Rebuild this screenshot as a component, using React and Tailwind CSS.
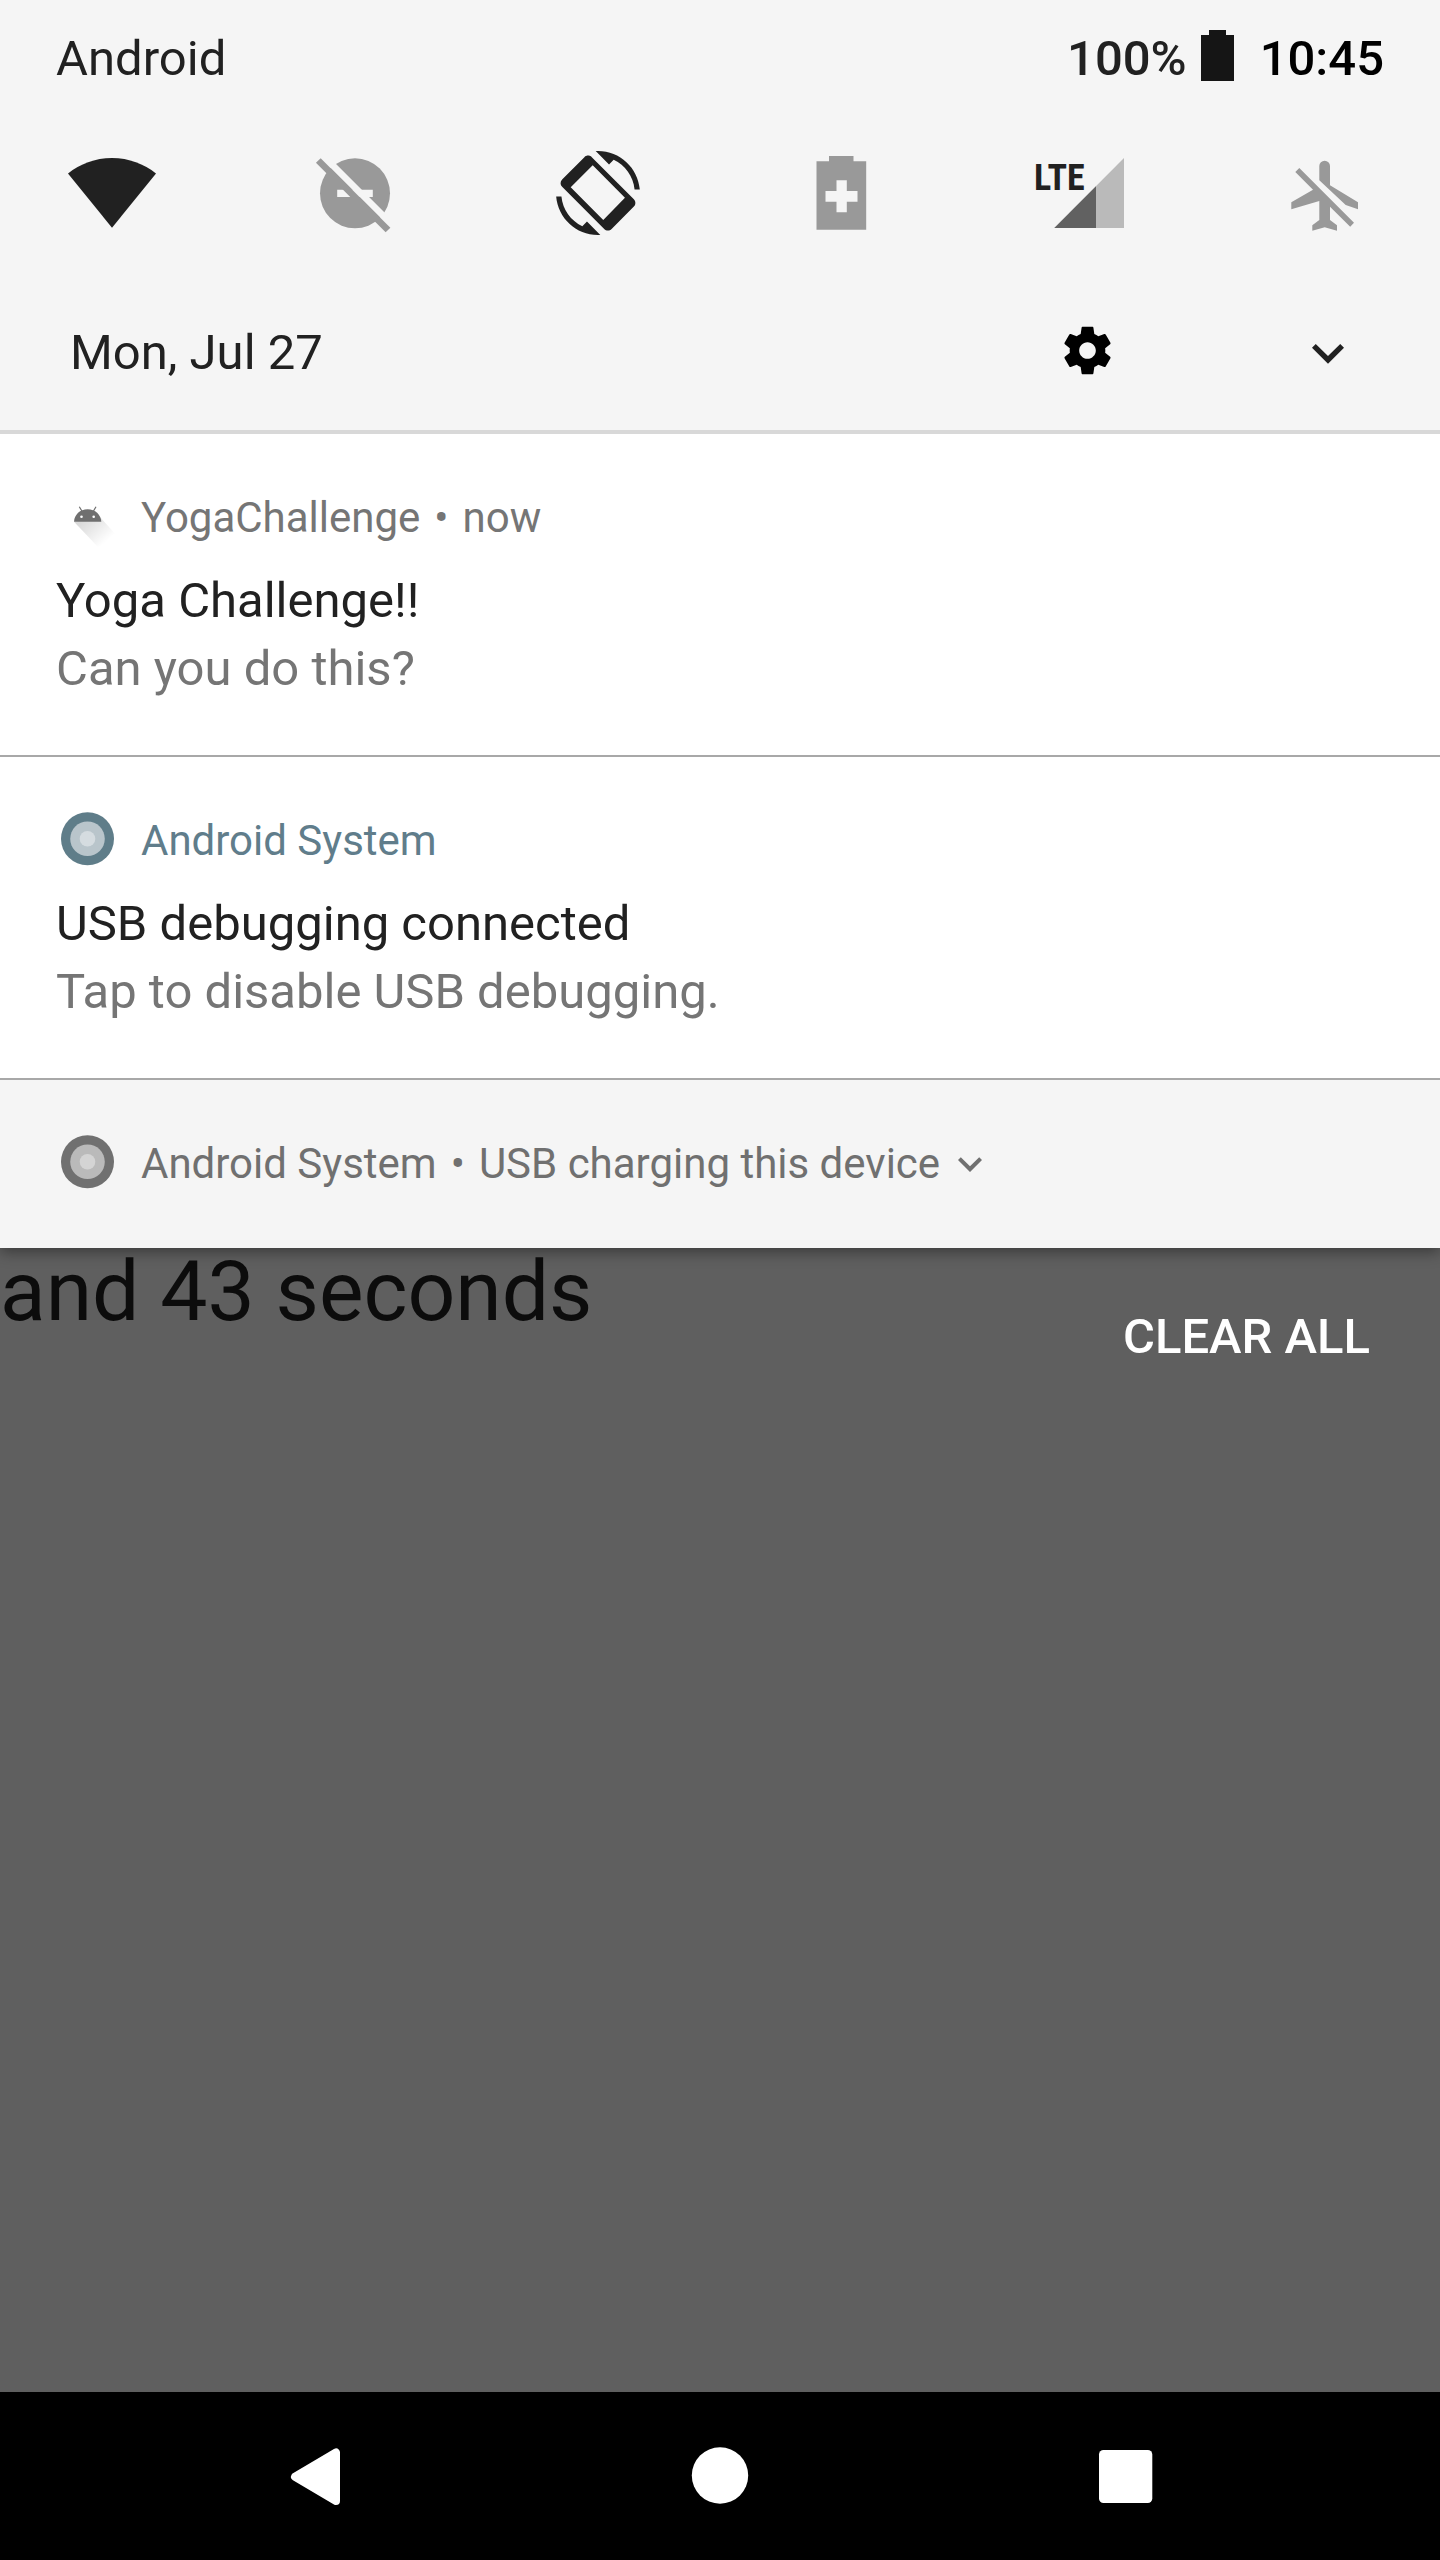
function Tile({ label, children }) {
  return (
    <button type="button" aria-label={label} className="h-28 w-28">
      <svg viewBox="0 0 112 112" className="h-28 w-28">
        {children}
      </svg>
    </button>
  );
}

function Chevron({ className }) {
  return (
    <svg viewBox="0 0 24 24" className={className} fill="currentColor" aria-hidden="true">
      <path d="M16.59 8.59 12 13.17 7.41 8.59 6 10l6 6 6-6z" />
    </svg>
  );
}

function SystemIcon({ outer, middle, inner }) {
  return (
    <svg viewBox="0 0 63 63" className="h-[63px] w-[63px] shrink-0" aria-hidden="true">
      <circle cx="31.5" cy="28.8" r="26.5" fill={outer} />
      <circle cx="31.5" cy="28.8" r="17.3" fill={middle} />
      <circle cx="31.5" cy="28.8" r="7.8" fill={inner} />
    </svg>
  );
}

function AndroidHead() {
  return (
    <svg viewBox="0 0 63 63" className="h-[63px] w-[63px] shrink-0" aria-hidden="true">
      <defs>
        <linearGradient id="head-shadow" gradientUnits="userSpaceOnUse" x1="30" y1="30" x2="51" y2="54">
          <stop offset="0" stopColor="#000" stopOpacity="0.15" />
          <stop offset="1" stopColor="#000" stopOpacity="0" />
        </linearGradient>
      </defs>
      <path d="M18 34.7 42 60 62 50 44 30z" fill="url(#head-shadow)" />
      <path d="M18 34.7c.4-7 6-12.4 13.6-12.4s13.3 5.4 13.7 12.4z" fill="#6f6f6f" />
      <path d="M23.3 19.8 26.2 24.5M40 19.8 37.2 24.5" stroke="#6f6f6f" strokeWidth="1.2" />
      <circle cx="25.5" cy="29.8" r="1.3" fill="#fff" />
      <circle cx="37.7" cy="29.8" r="1.3" fill="#fff" />
    </svg>
  );
}

function Dot() {
  return <span className="mx-[14px]">•</span>;
}

function Notification({ icon, header, title, text }) {
  return (
    <article className="border-b-2 border-[#a8a8a8] bg-white px-14 pt-14 pb-[52px]">
      <header className="flex h-14 items-center text-[42px] leading-[56px] text-[#757575]">
        {icon}
        <div className="ml-[22px] flex">{header}</div>
      </header>
      <h2 className="mt-[21px] text-[49px] leading-[68px] text-[#212121]">{title}</h2>
      <p className="text-[49px] leading-[68px] text-[#757575]">{text}</p>
    </article>
  );
}

export default function App() {
  return (
    <div className="flex min-h-screen flex-col bg-[#5f5f5f] font-['Roboto',sans-serif]">
      <div className="relative z-10 shadow-[0_4px_14px_rgba(0,0,0,0.4)]">
        <section className="border-b-4 border-[#d8d8d8] bg-[#f5f5f5]">
          <div className="flex h-[118px] items-center px-14 text-[49px] leading-[56px] text-[#212121]">
            <span>Android</span>
            <span className="ml-auto font-medium">100%</span>
            <svg viewBox="0 0 33 58" className="ml-[14px] h-[58px] w-[33px]" fill="#151515" aria-label="Battery full">
              <path d="M8 0h17v5h8v46H0V5h8z" />
            </svg>
            <time className="ml-[26px] font-medium text-black">10:45</time>
          </div>

          <div className="mt-[19px] flex justify-between px-14">
            <Tile label="Wi-Fi">
              <path d="M56 90.7 12 36.5C24 27 39 21 56 21s32 6 44 15.5z" fill="#212121" />
            </Tile>
            <Tile label="Do not disturb">
              <circle cx="56" cy="56.3" r="35" fill="#999" />
              <path d="M38.2 52.7h35.6V60H38.2z" fill="#f5f5f5" />
              <path d="M24 18.6 96 90.6" stroke="#f5f5f5" strokeWidth="6.6" />
              <path d="M19.3 23.5 89 93" stroke="#999" strokeWidth="6.7" />
            </Tile>
            <Tile label="Auto-rotate">
              <g transform="translate(14 14) scale(3.5)" fill="#212121">
                <path d="M16.48 2.52c3.27 1.55 5.61 4.72 5.97 8.48h1.5C23.44 4.84 18.29 0 12 0l-.66.03 3.81 3.81 1.33-1.32zM7.52 21.48C4.25 19.94 1.91 16.76 1.55 13H.05C.56 19.16 5.71 24 12 24l.66-.03-3.81-3.81-1.33 1.32z" />
                <path
                  fillRule="evenodd"
                  d="M10.23 1.75c-.59-.59-1.54-.59-2.12 0L1.75 8.11c-.59.59-.59 1.54 0 2.12l12.02 12.02c.59.59 1.54.59 2.12 0l6.36-6.36c.59-.59.59-1.54 0-2.12zM10.49 4.09 19.7 13.34 13.5 19.7 4.2 10.37z"
                />
              </g>
            </Tile>
            <Tile label="Battery saver">
              <path
                fillRule="evenodd"
                fill="#999"
                d="M30.5 24.3H43V19H67.5v5.3H80.2v68.4H30.5zM50.5 43.3V54H39.5v10.7H50.5V75.3H60.8V64.7H71.500V54H60.8V43.3z"
              />
            </Tile>
            <Tile label="Mobile data">
              <path d="M25.3 91 95 21V91z" fill="#bababa" />
              <path d="M25.3 91 67 49.3V91z" fill="#616161" />
              <text
                x="5"
                y="53"
                fill="#212121"
                className="font-['Roboto_Condensed','Liberation_Sans_Narrow','Roboto',sans-serif] text-[36px] font-bold"
              >
                LTE
              </text>
            </Tile>
            <Tile label="Airplane mode">
              <g fill="#999">
                <path d="M47.3 43.3V29a5.35 5.35 0 0 1 10.7 0V48.3L86 65.3v7L73.7 68z" />
                <path d="M41 52.7 23.3 34.900 27.3 31 82 85.7 78.2 89.8 58 69.7V83l7 5.3v5.4L52.7 90.3 40.3 93.7V88.3L47.3 83V64L19.3 72.3v-7z" />
              </g>
            </Tile>
          </div>

          <div className="mt-[27px] flex h-[154px] items-center pr-20 pl-[70px] text-[#212121]">
            <span className="text-[49px] leading-[56px]">Mon, Jul 27</span>
            <button type="button" aria-label="Settings" className="ml-auto text-black">
              <svg viewBox="0 0 57 63" className="h-[63px] w-[57px]" fill="currentColor">
                <path
                  transform="scale(2.375)"
                  d="M19.43 12.98c.04-.32.07-.64.07-.98s-.03-.66-.07-.98l2.11-1.65c.19-.15.24-.42.12-.64l-2-3.46c-.12-.22-.39-.3-.61-.22l-2.49 1c-.52-.4-1.08-.73-1.69-.98l-.38-2.65C14.46 2.18 14.25 2 14 2h-4c-.25 0-.46.18-.49.42l-.38 2.65c-.61.25-1.17.59-1.69.98l-2.49-1c-.23-.09-.49 0-.61.22l-2 3.46c-.13.22-.07.49.12.64l2.11 1.65c-.04.32-.07.65-.07.98s.03.66.07.98l-2.11 1.65c-.19.15-.24.42-.12.64l2 3.46c.12.22.39.3.61.22l2.49-1c.52.4 1.08.73 1.69.98l.38 2.65c.03.24.24.42.49.42h4c.25 0 .46-.18.49-.42l.38-2.65c.61-.25 1.17-.59 1.69-.98l2.49 1c.23.09.49 0 .61-.22l2-3.46c.12-.22.07-.49-.12-.64l-2.11-1.65zM12 15.5c-1.93 0-3.5-1.57-3.5-3.5s1.57-3.5 3.5-3.5 3.5 1.57 3.5 3.5-1.57 3.5-3.5 3.5z"
                />
              </svg>
            </button>
            <button type="button" aria-label="Expand quick settings" className="ml-[180px]">
              <Chevron className="h-16 w-16" />
            </button>
          </div>
        </section>

        <Notification
          icon={<AndroidHead />}
          header={
            <>
              <span>YogaChallenge</span>
              <Dot />
              <span>now</span>
            </>
          }
          title="Yoga Challenge!!"
          text="Can you do this?"
        />
        <Notification
          icon={<SystemIcon outer="#5f7d89" middle="#b9c5cb" inner="#d5dce0" />}
          header={<span className="text-[#607d8b]">Android System</span>}
          title="USB debugging connected"
          text="Tap to disable USB debugging."
        />
        <article className="bg-[#f5f5f5] px-14 py-14">
          <div className="flex h-14 items-center text-[42px] leading-[56px] text-[#707070]">
            <SystemIcon outer="#707070" middle="#bababa" inner="#d4d4d4" />
            <div className="ml-[22px] flex">
              <span>Android System</span>
              <Dot />
              <span>USB charging this device</span>
            </div>
            <button type="button" aria-label="Expand notification" className="ml-[6px]">
              <Chevron className="h-12 w-12" />
            </button>
          </div>
        </article>
      </div>

      <main className="flex flex-1 items-start justify-between">
        <p className="text-[84px] leading-[88px] text-[#0c0c0c]">and 43 seconds</p>
        <button type="button" className="mt-[45px] mr-[70px] text-[49px] leading-[88px] font-medium text-white">
          CLEAR ALL
        </button>
      </main>

      <nav className="flex h-[168px] items-center justify-between bg-black px-[175px]">
        <button type="button" aria-label="Back" className="flex h-full w-[280px] items-center justify-center">
          <svg viewBox="0 0 84 84" className="h-[84px] w-[84px]">
            <path d="M63 18.5V67L22 42.7z" fill="#fff" stroke="#fff" strokeWidth="8" strokeLinejoin="round" />
          </svg>
        </button>
        <button type="button" aria-label="Home" className="flex h-full w-[280px] items-center justify-center">
          <svg viewBox="0 0 84 84" className="h-[84px] w-[84px]" fill="#fff">
            <circle cx="42" cy="41.5" r="28.2" />
          </svg>
        </button>
        <button type="button" aria-label="Recent apps" className="flex h-full w-[280px] items-center justify-center">
          <svg viewBox="0 0 84 84" className="h-[84px] w-[84px]" fill="#fff">
            <rect x="16" y="16" width="53.3" height="53" rx="4.5" />
          </svg>
        </button>
      </nav>
    </div>
  );
}
